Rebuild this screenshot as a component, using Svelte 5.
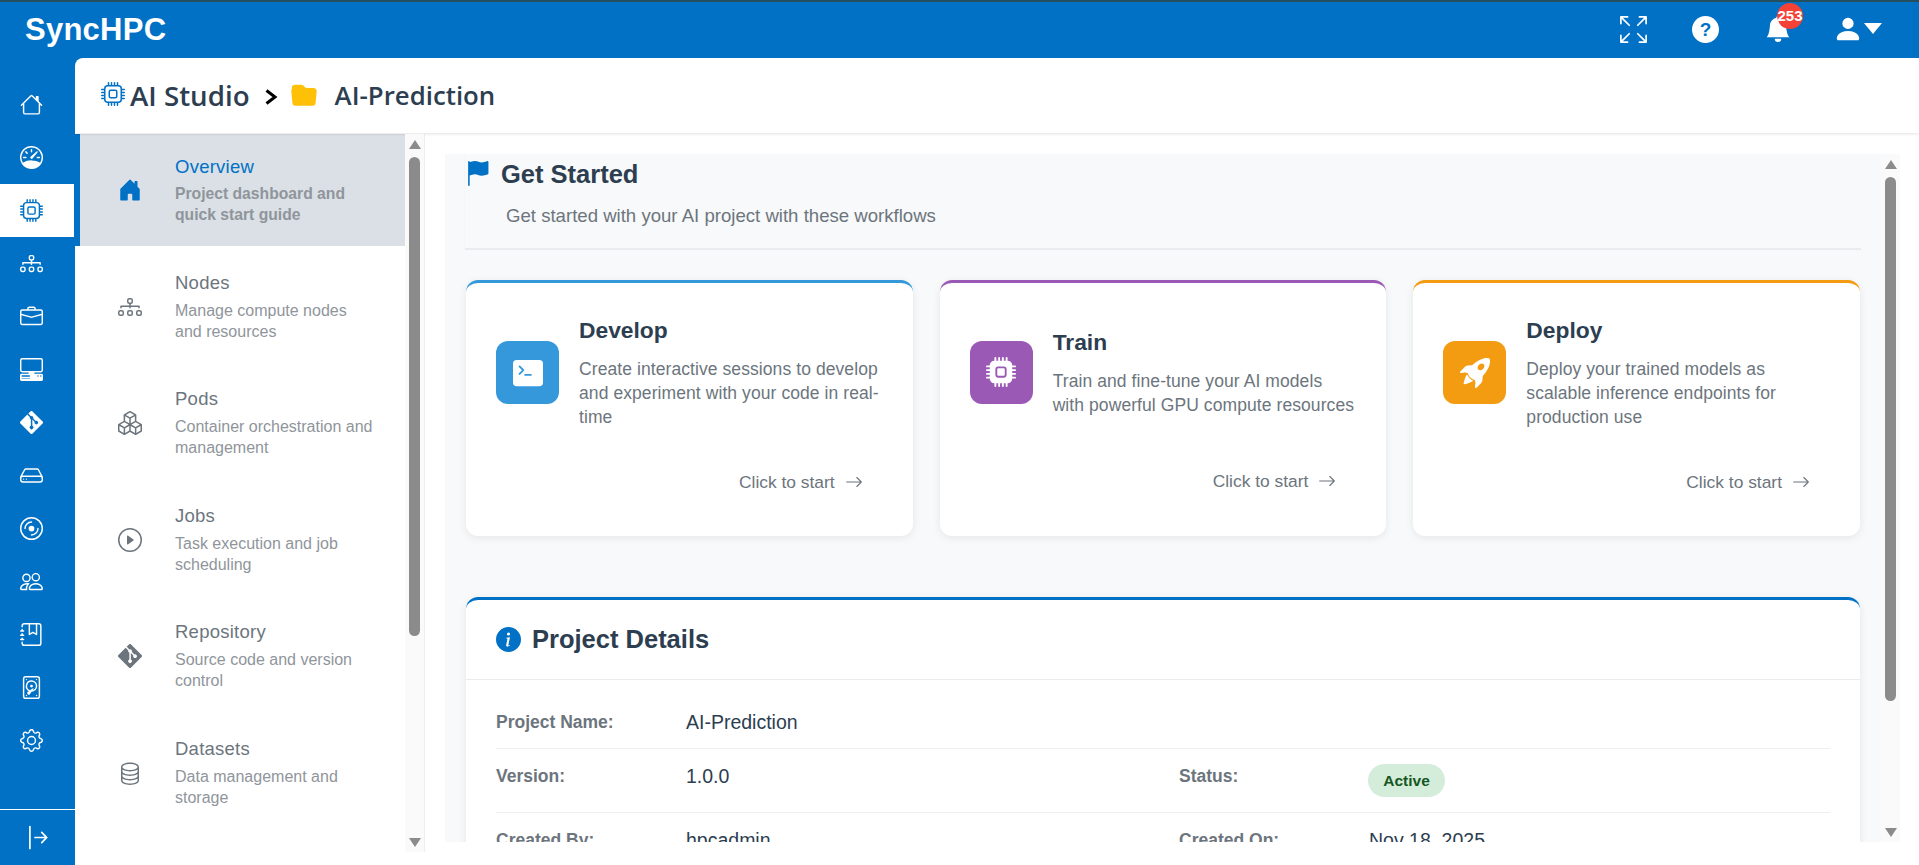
<script>
  const P = {
    house: "M8.707 1.5a1 1 0 0 0-1.414 0L.646 8.146a.5.5 0 0 0 .708.708L2 8.207V13.5A1.5 1.5 0 0 0 3.5 15h9a1.5 1.5 0 0 0 1.5-1.5V8.207l.646.647a.5.5 0 0 0 .708-.708L13 5.793V2.5a.5.5 0 0 0-.5-.5h-1a.5.5 0 0 0-.5.5v1.293L8.707 1.5ZM13 7.207V13.5a.5.5 0 0 1-.5.5h-9a.5.5 0 0 1-.5-.5V7.207l5-5 5 5Z",
    houseFill: "M6.5 14.5v-3.505c0-.245.25-.495.5-.495h2c.25 0 .5.25.5.5v3.5a.5.5 0 0 0 .5.5h4a.5.5 0 0 0 .5-.5v-7a.5.5 0 0 0-.146-.354L13 5.793V2.5a.5.5 0 0 0-.5-.5h-1a.5.5 0 0 0-.5.5v1.293L8.354 1.146a.5.5 0 0 0-.708 0l-6 6A.5.5 0 0 0 1.5 7.5v7a.5.5 0 0 0 .5.5h4a.5.5 0 0 0 .5-.5Z",
    speed: "M8 2a.5.5 0 0 1 .5.5V4a.5.5 0 0 1-1 0V2.5A.5.5 0 0 1 8 2zM3.732 3.732a.5.5 0 0 1 .707 0l.915.914a.5.5 0 1 1-.708.708l-.914-.915a.5.5 0 0 1 0-.707zM2 8a.5.5 0 0 1 .5-.5h1.586a.5.5 0 0 1 0 1H2.5A.5.5 0 0 1 2 8zm9.5 0a.5.5 0 0 1 .5-.5h1.5a.5.5 0 0 1 0 1H12a.5.5 0 0 1-.5-.5zm.754-4.246a.389.389 0 0 0-.527-.02L7.547 7.31A.91.91 0 1 0 8.85 8.569l3.434-4.297a.389.389 0 0 0-.029-.518zM6.664 15.889A8 8 0 1 1 9.336.11a8 8 0 0 1-2.672 15.78zm-4.665-4.283A11.945 11.945 0 0 1 8 10c2.186 0 4.236.585 6.001 1.606a7 7 0 1 0-12.002 0z",
    cpu: "M5 0a.5.5 0 0 1 .5.5V2h1V.5a.5.5 0 0 1 1 0V2h1V.5a.5.5 0 0 1 1 0V2h1V.5a.5.5 0 0 1 1 0V2A2.5 2.5 0 0 1 14 4.5h1.5a.5.5 0 0 1 0 1H14v1h1.5a.5.5 0 0 1 0 1H14v1h1.5a.5.5 0 0 1 0 1H14v1h1.5a.5.5 0 0 1 0 1H14a2.5 2.5 0 0 1-2.5 2.5v1.5a.5.5 0 0 1-1 0V14h-1v1.5a.5.5 0 0 1-1 0V14h-1v1.5a.5.5 0 0 1-1 0V14h-1v1.5a.5.5 0 0 1-1 0V14A2.5 2.5 0 0 1 2 11.5H.5a.5.5 0 0 1 0-1H2v-1H.5a.5.5 0 0 1 0-1H2v-1H.5a.5.5 0 0 1 0-1H2v-1H.5a.5.5 0 0 1 0-1H2A2.5 2.5 0 0 1 4.5 2V.5A.5.5 0 0 1 5 0zm-.5 3A1.5 1.5 0 0 0 3 4.5v7A1.5 1.5 0 0 0 4.5 13h7a1.5 1.5 0 0 0 1.5-1.5v-7A1.5 1.5 0 0 0 11.5 3h-7zM5 6.5A1.5 1.5 0 0 1 6.5 5h3A1.5 1.5 0 0 1 11 6.5v3A1.5 1.5 0 0 1 9.5 11h-3A1.5 1.5 0 0 1 5 9.5v-3zM6.5 6a.5.5 0 0 0-.5.5v3a.5.5 0 0 0 .5.5h3a.5.5 0 0 0 .5-.5v-3a.5.5 0 0 0-.5-.5h-3z",
    cpuFill: "M6.5 6a.5.5 0 0 0-.5.5v3a.5.5 0 0 0 .5.5h3a.5.5 0 0 0 .5-.5v-3a.5.5 0 0 0-.5-.5h-3zM5.5.5a.5.5 0 0 0-1 0V2A2.5 2.5 0 0 0 2 4.5H.5a.5.5 0 0 0 0 1H2v1H.5a.5.5 0 0 0 0 1H2v1H.5a.5.5 0 0 0 0 1H2v1H.5a.5.5 0 0 0 0 1H2A2.5 2.5 0 0 0 4.5 14v1.5a.5.5 0 0 0 1 0V14h1v1.5a.5.5 0 0 0 1 0V14h1v1.5a.5.5 0 0 0 1 0V14h1v1.5a.5.5 0 0 0 1 0V14a2.5 2.5 0 0 0 2.5-2.5h1.5a.5.5 0 0 0 0-1H14v-1h1.5a.5.5 0 0 0 0-1H14v-1h1.5a.5.5 0 0 0 0-1H14v-1h1.5a.5.5 0 0 0 0-1H14A2.5 2.5 0 0 0 11.5 2V.5a.5.5 0 0 0-1 0V2h-1V.5a.5.5 0 0 0-1 0V2h-1V.5a.5.5 0 0 0-1 0V2h-1V.5zm1 4.5h3A1.5 1.5 0 0 1 11 6.5v3A1.5 1.5 0 0 1 9.5 11h-3A1.5 1.5 0 0 1 5 9.5v-3A1.5 1.5 0 0 1 6.5 5z",
    nodes: "M6 3.5A1.5 1.5 0 0 1 7.5 2h1A1.5 1.5 0 0 1 10 3.5v1A1.5 1.5 0 0 1 8.5 6v1H14a.5.5 0 0 1 .5.5v1a.5.5 0 0 1-1 0V8h-5v.5a.5.5 0 0 1-1 0V8h-5v.5a.5.5 0 0 1-1 0v-1A.5.5 0 0 1 2 7h5.5V6A1.5 1.5 0 0 1 6 4.5v-1zM8.5 5a.5.5 0 0 0 .5-.5v-1a.5.5 0 0 0-.5-.5h-1a.5.5 0 0 0-.5.5v1a.5.5 0 0 0 .5.5h1zM0 11.5A1.5 1.5 0 0 1 1.5 10h1A1.5 1.5 0 0 1 4 11.5v1A1.5 1.5 0 0 1 2.5 14h-1A1.5 1.5 0 0 1 0 12.5v-1zm1.5-.5a.5.5 0 0 0-.5.5v1a.5.5 0 0 0 .5.5h1a.5.5 0 0 0 .5-.5v-1a.5.5 0 0 0-.5-.5h-1zm4.5.5A1.5 1.5 0 0 1 7.5 10h1a1.5 1.5 0 0 1 1.5 1.5v1A1.5 1.5 0 0 1 8.5 14h-1A1.5 1.5 0 0 1 6 12.5v-1zm1.5-.5a.5.5 0 0 0-.5.5v1a.5.5 0 0 0 .5.5h1a.5.5 0 0 0 .5-.5v-1a.5.5 0 0 0-.5-.5h-1zm4.5.5a1.5 1.5 0 0 1 1.5-1.5h1a1.5 1.5 0 0 1 1.5 1.5v1a1.5 1.5 0 0 1-1.5 1.5h-1a1.5 1.5 0 0 1-1.5-1.5v-1zm1.5-.5a.5.5 0 0 0-.5.5v1a.5.5 0 0 0 .5.5h1a.5.5 0 0 0 .5-.5v-1a.5.5 0 0 0-.5-.5h-1z",
    brief: "M6.5 1A1.5 1.5 0 0 0 5 2.5V3H1.5A1.5 1.5 0 0 0 0 4.5v8A1.5 1.5 0 0 0 1.5 14h13a1.5 1.5 0 0 0 1.5-1.5v-8A1.5 1.5 0 0 0 14.5 3H11v-.5A1.5 1.5 0 0 0 9.5 1h-3zm0 1h3a.5.5 0 0 1 .5.5V3H6v-.5a.5.5 0 0 1 .5-.5zm1.886 6.914L15 7.151V12.5a.5.5 0 0 1-.5.5h-13a.5.5 0 0 1-.5-.5V7.15l6.614 1.764a1.5 1.5 0 0 0 .772 0zM1.5 4h13a.5.5 0 0 1 .5.5v1.616L8.129 7.948a.5.5 0 0 1-.258 0L1 6.116V4.5a.5.5 0 0 1 .5-.5z",
    pc: "M1.5 0A1.5 1.5 0 0 0 0 1.5v7A1.5 1.5 0 0 0 1.5 10H6v1H1a1 1 0 0 0-1 1v3a1 1 0 0 0 1 1h14a1 1 0 0 0 1-1v-3a1 1 0 0 0-1-1h-5v-1h4.5A1.5 1.5 0 0 0 16 8.5v-7A1.5 1.5 0 0 0 14.5 0zm0 1h13a.5.5 0 0 1 .5.5v7a.5.5 0 0 1-.5.5h-13a.5.5 0 0 1-.5-.5v-7a.5.5 0 0 1 .5-.5M12 12.5a.5.5 0 1 1 1 0 .5.5 0 0 1-1 0m2 0a.5.5 0 1 1 1 0 .5.5 0 0 1-1 0M1.5 12h5a.5.5 0 0 1 0 1h-5a.5.5 0 0 1 0-1M1 14.25a.25.25 0 0 1 .25-.25h5.5a.25.25 0 1 1 0 .5h-5.5a.25.25 0 0 1-.25-.25",
    git: "M15.698 7.287 8.712.302a1.03 1.03 0 0 0-1.457 0l-1.45 1.45 1.84 1.84a1.223 1.223 0 0 1 1.55 1.56l1.773 1.774a1.224 1.224 0 0 1 1.267 2.025 1.226 1.226 0 0 1-2.002-1.334L8.58 5.963v4.353a1.226 1.226 0 1 1-1.008-.036V5.887a1.226 1.226 0 0 1-.666-1.608L5.093 2.465l-4.79 4.79a1.03 1.03 0 0 0 0 1.457l6.986 6.986a1.03 1.03 0 0 0 1.457 0l6.953-6.953a1.031 1.031 0 0 0 0-1.457",
    hdd: "M4.5 11a.5.5 0 1 0 0-1 .5.5 0 0 0 0 1M3 10.5a.5.5 0 1 1-1 0 .5.5 0 0 1 1 0M16 11a2 2 0 0 1-2 2H2a2 2 0 0 1-2-2V9.51c0-.418.105-.83.305-1.197l2.472-4.531A1.5 1.5 0 0 1 4.094 3h7.812a1.5 1.5 0 0 1 1.317.782l2.472 4.53c.2.368.305.78.305 1.198zM3.655 4.26 1.592 8.043Q1.79 8 2 8h12q.21 0 .408.043L12.345 4.26a.5.5 0 0 0-.439-.26H4.094a.5.5 0 0 0-.44.26zM1 11a1 1 0 0 0 1 1h12a1 1 0 0 0 1-1v-1a1 1 0 0 0-1-1H2a1 1 0 0 0-1 1z",
    disc: "M8 15A7 7 0 1 1 8 1a7 7 0 0 1 0 14m0 1A8 8 0 1 0 8 0a8 8 0 0 0 0 16M10 8a2 2 0 1 1-4 0 2 2 0 0 1 4 0M8 4a4 4 0 0 0-4 4 .5.5 0 0 1-1 0 5 5 0 0 1 5-5 .5.5 0 0 1 0 1m4.5 3.5a.5.5 0 0 1 .5.5 5 5 0 0 1-5 5 .5.5 0 0 1 0-1 4 4 0 0 0 4-4 .5.5 0 0 1 .5-.5",
    people: "M15 14s1 0 1-1-1-4-5-4-5 3-5 4 1 1 1 1zm-7.978-1L7 12.996c.001-.264.167-1.03.76-1.72C8.312 10.629 9.282 10 11 10c1.717 0 2.687.63 3.24 1.276.593.69.758 1.457.76 1.72l-.008.002-.014.002H7.022zM11 7a2 2 0 1 0 0-4 2 2 0 0 0 0 4m3-2a3 3 0 1 1-6 0 3 3 0 0 1 6 0M6.936 9.28a6 6 0 0 0-1.23-.247A7 7 0 0 0 5 9c-4 0-5 3-5 4q0 1 1 1h4.216A2.24 2.24 0 0 1 5 13c0-1.01.377-2.042 1.09-2.904.243-.294.526-.569.846-.816M4.92 10A5.5 5.5 0 0 0 4 13H1c0-.26.164-1.03.76-1.724.545-.636 1.492-1.256 3.16-1.275ZM1.5 5.5a3 3 0 1 1 6 0 3 3 0 0 1-6 0m3-2a2 2 0 1 0 0 4 2 2 0 0 0 0-4",
    journal: "M6 8V1h1v6.117L8.743 6.07a.5.5 0 0 1 .514 0L11 7.117V1h1v7a.5.5 0 0 1-.757.429L9 7.083 6.757 8.43A.5.5 0 0 1 6 8M3 0h10a2 2 0 0 1 2 2v12a2 2 0 0 1-2 2H3a2 2 0 0 1-2-2v-1h1v1a1 1 0 0 0 1 1h10a1 1 0 0 0 1-1V2a1 1 0 0 0-1-1H3a1 1 0 0 0-1 1v1H1V2a2 2 0 0 1 2-2M1 5v-.5a.5.5 0 0 1 1 0V5h.5a.5.5 0 0 1 0 1h-2a.5.5 0 0 1 0-1zm0 3v-.5a.5.5 0 0 1 1 0V8h.5a.5.5 0 0 1 0 1h-2a.5.5 0 0 1 0-1zm0 3v-.5a.5.5 0 0 1 1 0v.5h.5a.5.5 0 0 1 0 1h-2a.5.5 0 0 1 0-1z",
    devhdd: "M12 2.5a.5.5 0 1 1-1 0 .5.5 0 0 1 1 0m0 11a.5.5 0 1 1-1 0 .5.5 0 0 1 1 0m-7.5.5a.5.5 0 1 0 0-1 .5.5 0 0 0 0 1M5 2.5a.5.5 0 1 1-1 0 .5.5 0 0 1 1 0M8 8a1 1 0 1 0 0-2 1 1 0 0 0 0 2M12 7a4 4 0 0 1-3.937 4c-.537.813-1.02 1.515-1.181 1.677a1.102 1.102 0 0 1-1.56-1.559c.1-.098.396-.314.795-.588A4 4 0 0 1 8 3a4 4 0 0 1 4 4m-1 0a3 3 0 1 0-3.891 2.865c.667-.44 1.396-.91 1.955-1.268.224-.144.483.115.34.34l-.62.96A3 3 0 0 0 11 7M2 2a2 2 0 0 1 2-2h8a2 2 0 0 1 2 2v12a2 2 0 0 1-2 2H4a2 2 0 0 1-2-2zm2-1a1 1 0 0 0-1 1v12a1 1 0 0 0 1 1h8a1 1 0 0 0 1-1V2a1 1 0 0 0-1-1z",
    gear: "M8 4.754a3.246 3.246 0 1 0 0 6.492 3.246 3.246 0 0 0 0-6.492zM5.754 8a2.246 2.246 0 1 1 4.492 0 2.246 2.246 0 0 1-4.492 0zM9.796 1.343c-.527-1.79-3.065-1.79-3.592 0l-.094.319a.873.873 0 0 1-1.255.52l-.292-.16c-1.64-.892-3.433.902-2.54 2.541l.159.292a.873.873 0 0 1-.52 1.255l-.319.094c-1.79.527-1.79 3.065 0 3.592l.319.094a.873.873 0 0 1 .52 1.255l-.16.292c-.892 1.64.901 3.434 2.541 2.54l.292-.159a.873.873 0 0 1 1.255.52l.094.319c.527 1.79 3.065 1.79 3.592 0l.094-.319a.873.873 0 0 1 1.255-.52l.292.16c1.64.893 3.434-.902 2.54-2.541l-.159-.292a.873.873 0 0 1 .52-1.255l.319-.094c1.79-.527 1.79-3.065 0-3.592l-.319-.094a.873.873 0 0 1-.52-1.255l.16-.292c.893-1.64-.902-3.433-2.541-2.54l-.292.159a.873.873 0 0 1-1.255-.52l-.094-.319zm-2.633.283c.246-.835 1.428-.835 1.674 0l.094.319a1.873 1.873 0 0 0 2.693 1.115l.291-.16c.764-.415 1.6.42 1.184 1.185l-.159.292a1.873 1.873 0 0 0 1.116 2.692l.318.094c.835.246.835 1.428 0 1.674l-.319.094a1.873 1.873 0 0 0-1.115 2.693l.16.291c.415.764-.42 1.6-1.185 1.184l-.291-.159a1.873 1.873 0 0 0-2.693 1.116l-.094.318c-.246.835-1.428.835-1.674 0l-.094-.319a1.873 1.873 0 0 0-2.692-1.115l-.292.16c-.764.415-1.6-.42-1.184-1.185l.159-.291A1.873 1.873 0 0 0 1.945 8.93l-.319-.094c-.835-.246-.835-1.428 0-1.674l.319-.094A1.873 1.873 0 0 0 3.06 4.377l-.16-.292c-.415-.764.42-1.6 1.185-1.184l.292.159a1.873 1.873 0 0 0 2.692-1.115l.094-.319z",
    bar: "M6 8a.5.5 0 0 0 .5.5h5.793l-2.147 2.146a.5.5 0 0 0 .708.708l3-3a.5.5 0 0 0 0-.708l-3-3a.5.5 0 0 0-.708.708L12.293 7.5H6.5A.5.5 0 0 0 6 8Zm-2.5 7a.5.5 0 0 1-.5-.5v-13a.5.5 0 0 1 1 0v13a.5.5 0 0 1-.5.5Z",
    boxes: "M7.752.066a.5.5 0 0 1 .496 0l3.75 2.143a.5.5 0 0 1 .252.434v3.995l3.498 2A.5.5 0 0 1 16 9.07v4.286a.5.5 0 0 1-.252.434l-3.75 2.143a.5.5 0 0 1-.496 0l-3.502-2-3.502 2.001a.5.5 0 0 1-.496 0l-3.75-2.143A.5.5 0 0 1 0 13.357V9.071a.5.5 0 0 1 .252-.434L3.75 6.638V2.643a.5.5 0 0 1 .252-.434L7.752.066ZM4.25 7.504 1.508 9.071l2.742 1.567 2.742-1.567L4.25 7.504ZM7.5 9.933l-2.75 1.571v3.134l2.75-1.571V9.933Zm1 3.134 2.75 1.571v-3.134L8.5 9.933v3.134Zm.508-3.996 2.742 1.567 2.742-1.567-2.742-1.567-2.742 1.567Zm2.242-2.433V3.504L8.5 5.076V8.21l2.75-1.572ZM7.5 8.21V5.076L4.75 3.504v3.134L7.5 8.21ZM5.258 2.643 8 4.21l2.742-1.567L8 1.076 5.258 2.643ZM15 9.933l-2.75 1.571v3.134L15 13.067V9.933ZM3.75 14.638v-3.134L1 9.933v3.134l2.75 1.571Z",
    play: "M8 15A7 7 0 1 1 8 1a7 7 0 0 1 0 14zm0 1A8 8 0 1 0 8 0a8 8 0 0 0 0 16zM6.271 5.055a.5.5 0 0 1 .52.038l3.5 2.5a.5.5 0 0 1 0 .814l-3.5 2.5A.5.5 0 0 1 6 10.5v-5a.5.5 0 0 1 .271-.445z",
    db: "M4.318 2.687C5.234 2.271 6.536 2 8 2s2.766.27 3.682.687C12.644 3.125 13 3.627 13 4c0 .374-.356.875-1.318 1.313C10.766 5.729 9.464 6 8 6s-2.766-.27-3.682-.687C3.356 4.875 3 4.373 3 4c0-.374.356-.875 1.318-1.313ZM13 5.698V7c0 .374-.356.875-1.318 1.313C10.766 8.729 9.464 9 8 9s-2.766-.27-3.682-.687C3.356 7.875 3 7.373 3 7V5.698c.271.202.58.378.904.525C4.978 6.711 6.427 7 8 7s3.022-.289 4.096-.777A4.92 4.92 0 0 0 13 5.698ZM14 4c0-1.007-.875-1.755-1.904-2.223C11.022 1.289 9.573 1 8 1s-3.022.289-4.096.777C2.875 2.245 2 2.993 2 4v9c0 1.007.875 1.755 1.904 2.223C4.978 15.71 6.427 16 8 16s3.022-.289 4.096-.777C13.125 14.755 14 14.007 14 13V4Zm-1 4.698V10c0 .374-.356.875-1.318 1.313C10.766 11.729 9.464 12 8 12s-2.766-.27-3.682-.687C3.356 10.875 3 10.373 3 10V8.698c.271.202.58.378.904.525C4.978 9.71 6.427 10 8 10s3.022-.289 4.096-.777A4.92 4.92 0 0 0 13 8.698Zm0 3V13c0 .374-.356.875-1.318 1.313C10.766 14.729 9.464 15 8 15s-2.766-.27-3.682-.687C3.356 13.875 3 13.373 3 13v-1.302c.271.202.58.378.904.525C4.978 12.71 6.427 13 8 13s3.022-.289 4.096-.777c.324-.147.633-.323.904-.525Z",
    flag: "M14.778.085A.5.5 0 0 1 15 .5V8a.5.5 0 0 1-.314.464L14.5 8l.186.464-.003.001-.006.003-.023.009a12.435 12.435 0 0 1-.397.15c-.264.095-.631.223-1.047.35-.816.252-1.879.523-2.71.523-.847 0-1.548-.28-2.158-.525l-.028-.01C7.68 8.71 7.14 8.5 6.5 8.5c-.7 0-1.638.23-2.437.477A19.626 19.626 0 0 0 3 9.342V15.5a.5.5 0 0 1-1 0V.5a.5.5 0 0 1 1 0v.282c.226-.079.496-.17.79-.26C4.606.272 5.67 0 6.5 0c.84 0 1.524.277 2.121.519l.043.018C9.286.788 9.828 1 10.5 1c.7 0 1.638-.23 2.437-.477a19.587 19.587 0 0 0 1.349-.476l.019-.007.004-.002h.001",
    term: "M0 3a2 2 0 0 1 2-2h12a2 2 0 0 1 2 2v10a2 2 0 0 1-2 2H2a2 2 0 0 1-2-2V3zm9.5 5.5h-3a.5.5 0 0 0 0 1h3a.5.5 0 0 0 0-1zm-6.354-.354a.5.5 0 1 0 .708.708l2-2a.5.5 0 0 0 0-.708l-2-2a.5.5 0 1 0-.708.708L4.793 6.5 3.146 8.146z",
    rocket: "M12.17 9.53c2.307-2.592 3.278-4.684 3.641-6.218.21-.887.214-1.58.16-2.065a3.578 3.578 0 0 0-.108-.563 2.22 2.22 0 0 0-.078-.23V.453c-.073-.164-.168-.234-.352-.295a2.35 2.35 0 0 0-.16-.045 3.797 3.797 0 0 0-.57-.093c-.49-.044-1.19-.03-2.08.188-1.536.374-3.618 1.343-6.161 3.604l-2.4.238h-.006a2.552 2.552 0 0 0-1.524.734L.15 7.17a.512.512 0 0 0 .433.868l1.896-.271c.28-.04.592.013.955.132.232.076.437.16.655.248l.203.083c.196.816.66 1.58 1.275 2.195.613.614 1.376 1.08 2.191 1.277l.082.202c.089.218.173.424.249.657.118.363.172.676.132.956l-.271 1.9a.512.512 0 0 0 .867.433l2.382-2.386c.41-.41.668-.949.732-1.526l.24-2.408Zm.11-3.699c-.797.8-1.93.961-2.528.362-.598-.6-.436-1.733.361-2.532.798-.799 1.93-.96 2.528-.361.599.599.437 1.732-.36 2.531ZM5.205 10.787a7.632 7.632 0 0 0 1.804 1.352c-1.118 1.007-4.929 2.028-5.054 1.903-.126-.127.737-4.189 1.839-5.18.346.69.837 1.35 1.411 1.925Z",
    arrow: "M1 8a.5.5 0 0 1 .5-.5h11.793l-3.147-3.146a.5.5 0 0 1 .708-.708l4 4a.5.5 0 0 1 0 .708l-4 4a.5.5 0 0 1-.708-.708L13.293 8.5H1.5A.5.5 0 0 1 1 8z",
    info: "M8 16A8 8 0 1 0 8 0a8 8 0 0 0 0 16zm.93-9.412-1 4.705c-.07.34.029.533.304.533.194 0 .487-.07.686-.246l-.088.416c-.287.346-.92.598-1.465.598-.703 0-1.002-.422-.808-1.319l.738-3.468c.064-.302.005-.41-.296-.483l-.451-.082.082-.381 2.29-.287zM8 5.5a1 1 0 1 1 0-2 1 1 0 0 1 0 2z",
    folder: "M9.828 3h3.982a2 2 0 0 1 1.992 2.181l-.637 7A2 2 0 0 1 13.174 14H2.825a2 2 0 0 1-1.991-1.819l-.637-7a1.99 1.99 0 0 1 .342-1.31L.5 3a2 2 0 0 1 2-2h3.672a2 2 0 0 1 1.414.586l.828.828A2 2 0 0 0 9.828 3z",
    full: "M5.828 10.172a.5.5 0 0 0-.707 0l-4.096 4.096V11.5a.5.5 0 0 0-1 0v3.975a.5.5 0 0 0 .5.5H4.5a.5.5 0 0 0 0-1H1.732l4.096-4.096a.5.5 0 0 0 0-.707zm4.344 0a.5.5 0 0 1 .707 0l4.096 4.096V11.5a.5.5 0 1 1 1 0v3.975a.5.5 0 0 1-.5.5H11.5a.5.5 0 0 1 0-1h2.768l-4.096-4.096a.5.5 0 0 1 0-.707zm0-4.344a.5.5 0 0 0 .707 0l4.096-4.096V4.5a.5.5 0 1 0 1 0V.525a.5.5 0 0 0-.5-.5H11.5a.5.5 0 0 0 0 1h2.768l-4.096 4.096a.5.5 0 0 0 0 .707zm-4.344 0a.5.5 0 0 1-.707 0L1.025 1.732V4.5a.5.5 0 0 1-1 0V.525a.5.5 0 0 1 .5-.5H4.5a.5.5 0 0 1 0 1H1.732l4.096 4.096a.5.5 0 0 1 0 .707z",
    bell: "M8 16a2 2 0 0 0 2-2H6a2 2 0 0 0 2 2zm.995-14.901a1 1 0 1 0-1.99 0A5.002 5.002 0 0 0 3 6c0 1.098-.5 6-2 7h14c-1.5-1-2-5.902-2-7 0-2.42-1.72-4.44-4.005-4.901z",
    person: "M3 14s-1 0-1-1 1-4 6-4 6 3 6 4-1 1-1 1H3Zm5-6a3 3 0 1 0 0-6 3 3 0 0 0 0 6Z"
  };
  const rail = ["house","speed","cpu","nodes","brief","pc","git","hdd","disc","people","journal","devhdd","gear"];
  const menu = [
    { t: "Overview", d: "Project dashboard and quick start guide", i: "houseFill", on: true },
    { t: "Nodes", d: "Manage compute nodes and resources", i: "nodes" },
    { t: "Pods", d: "Container orchestration and management", i: "boxes" },
    { t: "Jobs", d: "Task execution and job scheduling", i: "play" },
    { t: "Repository", d: "Source code and version control", i: "git" },
    { t: "Datasets", d: "Data management and storage", i: "db" }
  ];
  const cards = [
    { t: "Develop", d: "Create interactive sessions to develop and experiment with your code in real-time", i: "term", c: "#3498db" },
    { t: "Train", d: "Train and fine-tune your AI models with powerful GPU compute resources", i: "cpuFill", c: "#9b59b6" },
    { t: "Deploy", d: "Deploy your trained models as scalable inference endpoints for production use", i: "rocket", c: "#f39c12" }
  ];
</script>

{#snippet icon(name, size)}
  <svg class="ic" width={size} height={size} viewBox="0 0 16 16" fill="currentColor" aria-hidden="true"><path d={P[name]} /></svg>
{/snippet}

{#snippet scrollbar(cls)}
  <div class="track {cls}">
    <span class="up"></span>
    <span class="thumb"></span>
    <span class="down"></span>
  </div>
{/snippet}

<div class="app">
  <header class="top">
    <div class="brand">SyncHPC</div>
    <div class="tools">
      <span class="tool t-full">{@render icon("full", 27)}</span>
      <span class="tool t-help">?</span>
      <span class="tool t-bell">{@render icon("bell", 26)}<b class="badge">253</b></span>
      <span class="tool t-user">{@render icon("person", 30)}<i class="caret"></i></span>
    </div>
  </header>

  <div class="body">
    <nav class="rail">
      <div class="rail-list">
        {#each rail as r, n}
          <a class="rail-item" class:active={n === 2}>{@render icon(r, 23)}</a>
        {/each}
      </div>
      <a class="rail-foot">{@render icon("bar", 27)}</a>
    </nav>

    <div class="panel">
      <div class="crumbs">
        <span class="c-cpu">{@render icon("cpu", 24)}</span>
        <span class="c-text">AI Studio</span>
        <svg class="chev" width="14" height="16" viewBox="0 0 14 16" aria-hidden="true"><path d="M2.5 1.500 11 8l-8.500 6.500" fill="none" stroke="#000" stroke-width="3" /></svg>
        <span class="c-folder">{@render icon("folder", 26)}</span>
        <span class="c-text c-proj">AI-Prediction</span>
      </div>

      <div class="split">
        <aside class="side">
          <div class="menu">
            {#each menu as m}
              <div class="row" class:on={m.on}>
                <span class="row-ic">{@render icon(m.i, 24)}</span>
                <div class="row-tx">
                  <div class="row-t">{m.t}</div>
                  <div class="row-d">{m.d}</div>
                </div>
              </div>
            {/each}
          </div>
          {@render scrollbar("t-side")}
        </aside>

        <main class="main">
          <div class="view">
            <section class="head">
              <h2>{@render icon("flag", 25)}<span>Get Started</span></h2>
              <p>Get started with your AI project with these workflows</p>
            </section>

            <div class="cards">
              {#each cards as c}
                <article class="card" style="border-top-color:{c.c}">
                  <div class="card-row">
                    <div class="card-ic" style="background:{c.c}">{@render icon(c.i, 30)}</div>
                    <div class="card-tx">
                      <h3>{c.t}</h3>
                      <p>{c.d}</p>
                    </div>
                  </div>
                  <div class="card-link">Click to start {@render icon("arrow", 18)}</div>
                </article>
              {/each}
            </div>

            <section class="details">
              <div class="d-head">{@render icon("info", 25)}<h3>Project Details</h3></div>
              <div class="d-body">
                <div class="d-row one">
                  <div class="cell"><span class="lab">Project Name:</span><span class="val">AI-Prediction</span></div>
                </div>
                <div class="d-row">
                  <div class="cell"><span class="lab">Version:</span><span class="val">1.0.0</span></div>
                  <div class="cell"><span class="lab">Status:</span><span class="pill">Active</span></div>
                </div>
                <div class="d-row">
                  <div class="cell"><span class="lab">Created By:</span><span class="val">hpcadmin</span></div>
                  <div class="cell"><span class="lab">Created On:</span><span class="val">Nov 18, 2025</span></div>
                </div>
              </div>
            </section>
          </div>
          {@render scrollbar("t-main")}
        </main>
      </div>
    </div>
  </div>
</div>

<style>
  :global(body) { margin: 0; background: #fff; overflow: hidden; }
  .app { width: 1919px; height: 865px; display: flex; flex-direction: column; overflow: hidden; font-family: "Liberation Sans", Arial, sans-serif; background: #0071c5; }
  .ic { display: block; flex: none; }

  .top { height: 56px; flex: none; border-top: 2px solid #23505f; display: flex; align-items: center; justify-content: space-between; color: #fff; background: #0071c5; }
  .brand { margin-left: 25px; font-size: 31px; font-weight: 700; letter-spacing: .25px; line-height: 1; margin-top: -1px; }
  .tools { display: flex; align-items: center; margin-right: 37px; height: 56px; }
  .tool { display: block; position: relative; }
  .t-full { margin-right: 45px; margin-top: -1px; }
  .t-help { width: 27px; height: 27px; border-radius: 50%; background: #fff; color: #0071c5; font-size: 19px; font-weight: 700; line-height: 27px; text-align: center; margin-right: 46px; margin-top: -1px; }
  .t-bell { width: 26px; margin-right: 46px; margin-top: -2px; }
  .badge { position: absolute; left: 12px; top: -13px; width: 26px; height: 26px; border-radius: 50%; background: #f44336; color: #fff; font-size: 15px; line-height: 26px; text-align: center; }
  .t-user { display: flex; align-items: center; margin-top: -3px; margin-left: -1px; }
  .t-user .ic { margin-right: -2px; margin-left: -3px; }
  .caret { width: 0; height: 0; border-left: 9px solid transparent; border-right: 9px solid transparent; border-top: 11px solid #fff; margin-left: 3px; }

  .body { flex: 1; display: flex; min-height: 0; }
  .rail { width: 75px; flex: none; display: flex; flex-direction: column; color: #fff; background: #0071c5; }
  .rail-list { padding-top: 20px; flex: 1; }
  .rail-item { display: flex; align-items: center; justify-content: center; width: 62px; height: 53px; }
  .rail-item.active { width: 74px; padding-right: 12px; box-sizing: border-box; background: #fff; color: #0071c5; }
  .rail-foot { height: 56px; border-top: 1px solid #fff; display: flex; align-items: center; justify-content: center; width: 75px; box-sizing: border-box; }

  .panel { flex: 1; min-width: 0; background: #fff; border-top-left-radius: 8px; display: flex; flex-direction: column; overflow: hidden; }
  .crumbs { height: 75px; flex: none; display: flex; align-items: center; padding-left: 26px; box-shadow: 0 1px 3px rgba(0,0,0,.12); position: relative; color: #2c3e50; }
  .c-text { font-family: "Open Sans", sans-serif; font-weight: 600; font-size: 27.700px; line-height: 1; }
  .c-cpu { color: #0071c5; margin-right: 5px; margin-top: -4px; }
  .chev { margin: 3px 0 0 14px; }
  .c-folder { color: #ffc107; margin-left: 13px; margin-top: 0; }
  .c-proj { margin-left: 18px; font-size: 25.800px; }

  .split { flex: 1; display: flex; min-height: 0; align-items: flex-start; padding-top: 1px; }
  .side { width: 350px; height: 718px; flex: none; display: flex; box-sizing: border-box; border-right: 1px solid #eee; }
  .menu { width: 330px; flex: none; overflow: hidden; }
  .row { height: 112px; margin-bottom: 4.600px; display: flex; align-items: center; border-left: 5px solid transparent; box-sizing: border-box; color: #6c757d; }
  .row.on { background: #dae0e5; border-left-color: #0071c5; color: #0071c5; }
  .row-ic { width: 95px; flex: none; padding-left: 38px; box-sizing: border-box; }
  .row-tx { width: 200px; margin-bottom: 2px; }
  .row-t { font-size: 18.500px; line-height: 26px; letter-spacing: .25px; margin-bottom: 4px; }
  .row-d { font-size: 16px; line-height: 21px; color: #8f959b; }
  .row.on .row-t { margin-bottom: 3px; }
  .row.on .row-d { font-weight: 700; color: #8f959b; font-size: 15.700px; }

  .track { position: relative; width: 19px; flex: none; background: #fafafa; }
  .t-side { height: 100%; }
  .t-main { height: 688px; }
  .up, .down { position: absolute; left: 4px; width: 0; height: 0; border-left: 6px solid transparent; border-right: 6px solid transparent; }
  .up { top: 6px; border-bottom: 9px solid #8b8b8b; }
  .down { bottom: 5px; border-top: 9px solid #8b8b8b; }
  .thumb { position: absolute; left: 4px; width: 11px; border-radius: 6px; background: #8b8b8b; }
  .t-side .thumb { top: 23px; height: 479px; }
  .t-main .thumb { top: 23px; height: 524px; }

  .main { flex: 1; min-width: 0; height: 709px; display: flex; box-sizing: border-box; padding: 20px 19px 0 20px; }
  .view { flex: 1; min-width: 0; height: 688px; overflow: hidden; background: #f8f9fa; padding: 0 20px; box-sizing: border-box; }

  .head { height: 96px; box-sizing: border-box; border-bottom: 2px solid #e9ecef; box-shadow: -1px 0 2px rgba(0,0,0,.02); }
  .head h2 { margin: 0; display: flex; color: #2c3e50; font-size: 25.500px; line-height: 40px; font-weight: 700; }
  .head h2 .ic { color: #0071c5; margin: 7px 11px 0 0; }
  .head p { margin: 9px 0 0 41px; color: #6c757d; font-size: 18.600px; line-height: 26px; }

  .cards { display: grid; grid-template-columns: repeat(3, minmax(0, 1fr)); gap: 27px; padding: 0 1px; margin-top: 30px; }
  .card { height: 256px; box-sizing: border-box; background: #fff; border-radius: 12px; border-top: 3px solid; padding: 33px 30px 0 30px; box-shadow: 0 2px 8px rgba(0,0,0,.08); }
  .card-row { display: flex; align-items: center; min-height: 112px; }
  .card-ic { width: 63px; height: 63px; flex: none; border-radius: 12px; color: #fff; display: flex; align-items: center; justify-content: center; margin-right: 20px; }
  .card-tx { flex: 1; min-width: 0; }
  .card-tx h3 { margin: 1px 0 14px; color: #2c3e50; font-size: 22.800px; line-height: 26px; font-weight: 700; }
  .card-tx p { margin: 0; color: #6c757d; font-size: 17.500px; letter-spacing: .08px; line-height: 24px; }
  .card-link { margin-top: 41px; margin-right: 20px; display: flex; justify-content: flex-end; align-items: center; gap: 10px; color: #6c757d; font-size: 17.400px; line-height: 24px; }

  .details { margin-top: 61px; margin-left: 1px; margin-right: 1px; background: #fff; border-radius: 12px; border-top: 3px solid #0071c5; box-shadow: 0 2px 8px rgba(0,0,0,.08); }
  .d-head { height: 80px; box-sizing: border-box; border-bottom: 1px solid #e9ecef; padding-left: 30px; display: flex; align-items: center; color: #0071c5; }
  .d-head h3 { margin: 0 0 0 11px; font-size: 25.500px; font-weight: 700; color: #2c3e50; }
  .d-body { padding: 15px 30px 0; }
  .d-row { display: grid; grid-template-columns: 651px 651px; column-gap: 32px; border-bottom: 1px solid #eee; padding: 15px 0; }
  .d-row.one { padding-top: 0; padding-bottom: 14px; margin-top: 15px; display: block; }
  .cell { display: flex; align-items: flex-start; }
  .lab { width: 190px; flex: none; font-weight: 700; font-size: 17.500px; line-height: 24px; color: #6c757d; }
  .val { font-size: 19.500px; line-height: 24px; color: #2c3e50; }
  .pill { display: block; width: 77px; height: 33px; line-height: 33px; text-align: center; border-radius: 17px; background: #d4edda; color: #155724; font-weight: 700; font-size: 15.500px; margin-left: -1px; }
</style>
